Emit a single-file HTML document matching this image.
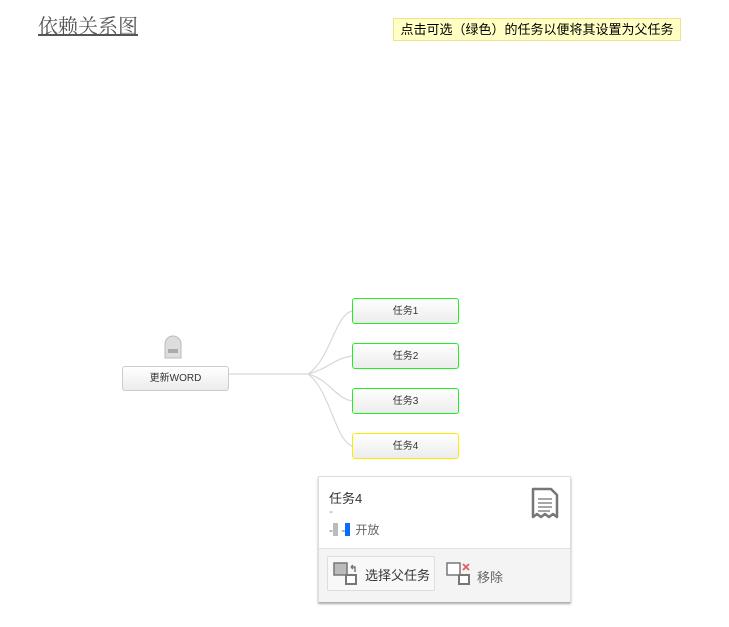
<!DOCTYPE html>
<html><head><meta charset="utf-8"><style>
body{margin:0;width:729px;height:627px;background:#fff;position:relative;overflow:hidden;font-family:"Liberation Sans","Noto Sans CJK SC",sans-serif;}
.abs{position:absolute}
.title{left:38px;top:14px;font-family:"Liberation Serif","Noto Serif CJK SC",serif;font-size:20px;color:#555;text-decoration:underline;line-height:26px}
.note{left:393px;top:18px;width:286px;height:21px;background:#ffffc4;border:1px solid #f2e38a;font-size:13px;line-height:21px;text-align:center;color:#000}
.node{box-sizing:border-box;width:107px;height:26px;border-radius:3px;background:linear-gradient(#fff,#ececec);font-size:10px;color:#333;text-align:center;line-height:26px}
.g{border:1.5px solid #22ee22}
.y{border:1.5px solid #f5f000}
.pop{left:318px;top:476px;width:251px;height:124px;border:1px solid #ddd;box-shadow:0 2px 2px #aaa;background:#fff}
.foot{position:absolute;left:0;top:71px;width:251px;height:53px;background:#f4f4f4;border-top:1px solid #e2e2e2}
.btn{position:absolute;left:8px;top:7px;width:108px;height:35px;box-sizing:border-box;border:1px solid #ddd;background:#f8f8f8;border-radius:2px}
</style></head><body>
<div class="abs title">依赖关系图</div>
<div class="abs note">点击可选（绿色）的任务以便将其设置为父任务</div>
<svg class="abs" style="left:0;top:0" width="729" height="627">
<g fill="none" stroke="#d8d8d8" stroke-width="1.2">
<path d="M228 374 L308 374"/>
<path d="M308 374 C330 360,335 315,352 311"/>
<path d="M308 374 C330 368,335 358,352 356"/>
<path d="M308 374 C330 380,335 398,352 401"/>
<path d="M308 374 C330 390,335 440,352 446"/>
</g>
<path d="M165 358 V344 a8 8 0 0 1 16 0 V358 Z" fill="#ddd" stroke="#bbb"/>
<rect x="168" y="349" width="10" height="4" fill="#aaa"/>
</svg>
<div class="abs node" style="left:122px;top:366px;height:25px;border:1px solid #ccc;line-height:23px">更新WORD</div>
<div class="abs node g" style="left:352px;top:298px">任务1</div>
<div class="abs node g" style="left:352px;top:343px">任务2</div>
<div class="abs node g" style="left:352px;top:388px">任务3</div>
<div class="abs node y" style="left:352px;top:433px">任务4</div>
<div class="abs pop">
<div style="position:absolute;left:10px;top:11px;font-size:13px;color:#333">任务4</div>
<div style="position:absolute;left:10px;top:27px;font-size:12px;color:#999">-</div>
<div style="position:absolute;left:10px;top:46px;font-size:12px;color:#666;line-height:14px">-<span style="display:inline-block;width:5px;height:13px;background:#bbb;vertical-align:-2px"></span> -<span style="display:inline-block;width:5px;height:13px;background:#0a6cff;vertical-align:-2px;margin-right:5px"></span>开放</div>
<svg style="position:absolute;left:212px;top:10px" width="28" height="34"><path d="M2 2 H20 L26 8 V30 l-4 -3 -4 3 -4 -3 -4 3 -4 -3 -4 3 Z" fill="#fff" stroke="#777" stroke-width="2.5" stroke-linejoin="round"/><g stroke="#888" stroke-width="1.5"><path d="M7 12H21M7 16H21M7 20H21M7 24H19"/></g></svg>
<div class="foot">
<div class="btn">
<svg style="position:absolute;left:5px;top:5px" width="26" height="24"><rect x="1" y="1" width="13" height="12" fill="#bbb" stroke="#777" stroke-width="1.5"/><rect x="13" y="13" width="10" height="9" fill="#fff" stroke="#777" stroke-width="2"/><path d="M18 5 H22 V10 M18 5 l2 -2 M18 5 l2 2" fill="none" stroke="#777" stroke-width="1.5"/></svg>
<span style="position:absolute;left:37px;top:8px;font-size:13px;color:#333">选择父任务</span></div>
<svg style="position:absolute;left:127px;top:13px" width="26" height="24"><rect x="1" y="1" width="13" height="12" fill="#fff" stroke="#777" stroke-width="1.5"/><rect x="13" y="13" width="10" height="9" fill="#fff" stroke="#777" stroke-width="2"/><path d="M17 2 L23 8 M23 2 L17 8" stroke="#e06060" stroke-width="1.8"/></svg>
<span style="position:absolute;left:158px;top:18px;font-size:13px;color:#666">移除</span>
</div>
</div>
</body></html>
